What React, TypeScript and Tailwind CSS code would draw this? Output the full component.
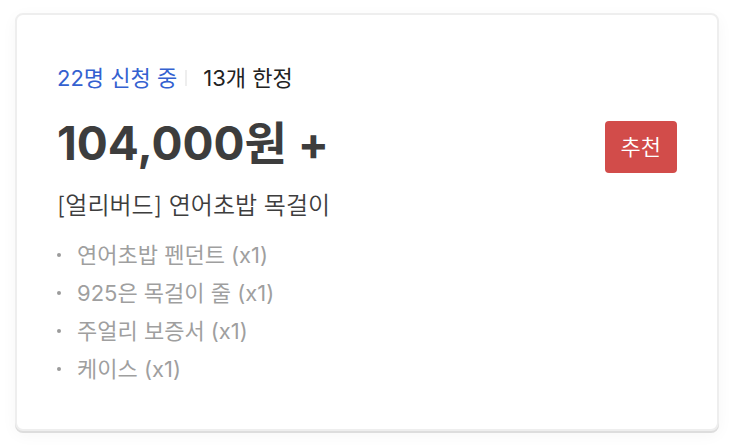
const reward = {
  backers: 22,
  limit: 13,
  price: "104,000",
  title: "[얼리버드] 연어초밥 목걸이",
  items: ["연어초밥 펜던트 (x1)", "925은 목걸이 줄 (x1)", "주얼리 보증서 (x1)", "케이스 (x1)"],
};

export default function App() {
  return (
    <main className="min-h-screen bg-white px-[15px] py-[13px] font-['Inter','Noto_Sans_CJK_KR',sans-serif]">
      <article className="rounded-lg border-2 border-[#eeeeee] bg-white px-10 pt-12 pb-[41px] shadow-[0_2px_0_#dddddd,0_4px_16px_rgba(0,0,0,0.04)]">
        {/* Backer count and stock limit */}
        <div className="flex items-center text-[22px] leading-[30px]">
          <span className="text-[#3461d0]">{reward.backers}명 신청 중</span>
          <span className="mx-2 h-4 w-0.5 bg-[#eeeeee]" />
          <span className="ml-2 text-[#222222]">{reward.limit}개 한정</span>
        </div>

        <div className="mt-5 flex items-end justify-between">
          <h2 className="text-[46px] leading-[60px] font-bold text-[#3d3d3d]">{reward.price}원 +</h2>
          <span className="rounded bg-[#d24c4a] px-4 py-2.5 text-[22px] leading-8 font-[350] text-white">추천</span>
        </div>

        <p className="mt-4 text-2xl leading-[34px] font-[350] text-[#3d3d3d]">{reward.title}</p>

        <ul className="mt-[13px] text-[22px] leading-[38px] text-[#9f9f9f]">
          {reward.items.map((item) => (
            <li key={item} className="flex items-center">
              <span className="mr-4 size-1 rounded-full bg-[#9b9b9b]" />
              {item}
            </li>
          ))}
        </ul>
      </article>
    </main>
  );
}
